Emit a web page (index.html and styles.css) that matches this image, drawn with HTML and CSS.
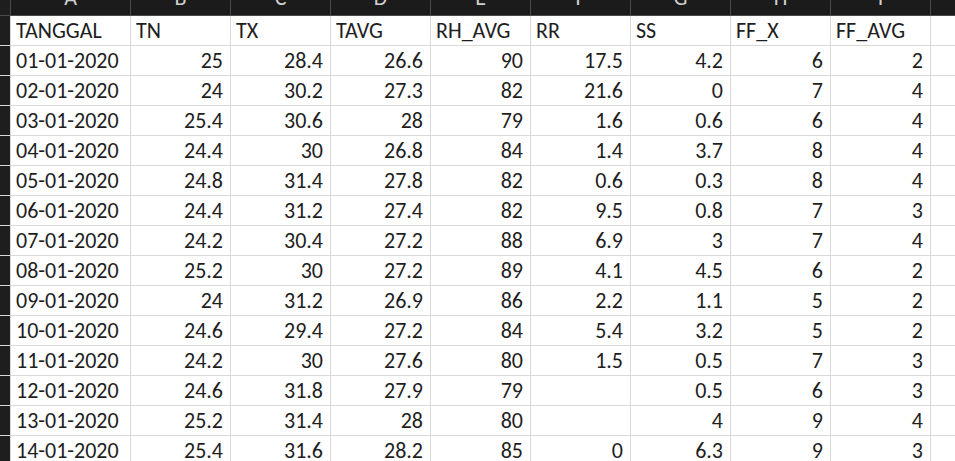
FILE: index.html
```html
<!DOCTYPE html>
<html>
<head>
<meta charset="utf-8">
<link rel="stylesheet" href="styles.css">
</head>
<body>
<div class="sheet">
  <div class="colheads">
    <div class="ch corner"><span class="corner-mark"></span></div>
    <div class="ch a"><span>A</span></div>
    <div class="ch"><span>B</span></div>
    <div class="ch"><span>C</span></div>
    <div class="ch"><span>D</span></div>
    <div class="ch"><span>E</span></div>
    <div class="ch"><span>F</span></div>
    <div class="ch"><span>G</span></div>
    <div class="ch"><span>H</span></div>
    <div class="ch"><span>I</span></div>
    <div class="ch j"><span>J</span></div>
  </div>
  <div class="grid">
    <div class="rh"></div><div class="c t">TANGGAL</div><div class="c t">TN</div><div class="c t">TX</div><div class="c t">TAVG</div><div class="c t">RH_AVG</div><div class="c t">RR</div><div class="c t">SS</div><div class="c t">FF_X</div><div class="c t">FF_AVG</div><div class="c"></div>
    <div class="rh"></div><div class="c t">01-01-2020</div><div class="c n">25</div><div class="c n">28.4</div><div class="c n">26.6</div><div class="c n">90</div><div class="c n">17.5</div><div class="c n">4.2</div><div class="c n">6</div><div class="c n">2</div><div class="c"></div>
    <div class="rh"></div><div class="c t">02-01-2020</div><div class="c n">24</div><div class="c n">30.2</div><div class="c n">27.3</div><div class="c n">82</div><div class="c n">21.6</div><div class="c n">0</div><div class="c n">7</div><div class="c n">4</div><div class="c"></div>
    <div class="rh"></div><div class="c t">03-01-2020</div><div class="c n">25.4</div><div class="c n">30.6</div><div class="c n">28</div><div class="c n">79</div><div class="c n">1.6</div><div class="c n">0.6</div><div class="c n">6</div><div class="c n">4</div><div class="c"></div>
    <div class="rh"></div><div class="c t">04-01-2020</div><div class="c n">24.4</div><div class="c n">30</div><div class="c n">26.8</div><div class="c n">84</div><div class="c n">1.4</div><div class="c n">3.7</div><div class="c n">8</div><div class="c n">4</div><div class="c"></div>
    <div class="rh"></div><div class="c t">05-01-2020</div><div class="c n">24.8</div><div class="c n">31.4</div><div class="c n">27.8</div><div class="c n">82</div><div class="c n">0.6</div><div class="c n">0.3</div><div class="c n">8</div><div class="c n">4</div><div class="c"></div>
    <div class="rh"></div><div class="c t">06-01-2020</div><div class="c n">24.4</div><div class="c n">31.2</div><div class="c n">27.4</div><div class="c n">82</div><div class="c n">9.5</div><div class="c n">0.8</div><div class="c n">7</div><div class="c n">3</div><div class="c"></div>
    <div class="rh"></div><div class="c t">07-01-2020</div><div class="c n">24.2</div><div class="c n">30.4</div><div class="c n">27.2</div><div class="c n">88</div><div class="c n">6.9</div><div class="c n">3</div><div class="c n">7</div><div class="c n">4</div><div class="c"></div>
    <div class="rh"></div><div class="c t">08-01-2020</div><div class="c n">25.2</div><div class="c n">30</div><div class="c n">27.2</div><div class="c n">89</div><div class="c n">4.1</div><div class="c n">4.5</div><div class="c n">6</div><div class="c n">2</div><div class="c"></div>
    <div class="rh"></div><div class="c t">09-01-2020</div><div class="c n">24</div><div class="c n">31.2</div><div class="c n">26.9</div><div class="c n">86</div><div class="c n">2.2</div><div class="c n">1.1</div><div class="c n">5</div><div class="c n">2</div><div class="c"></div>
    <div class="rh"></div><div class="c t">10-01-2020</div><div class="c n">24.6</div><div class="c n">29.4</div><div class="c n">27.2</div><div class="c n">84</div><div class="c n">5.4</div><div class="c n">3.2</div><div class="c n">5</div><div class="c n">2</div><div class="c"></div>
    <div class="rh"></div><div class="c t">11-01-2020</div><div class="c n">24.2</div><div class="c n">30</div><div class="c n">27.6</div><div class="c n">80</div><div class="c n">1.5</div><div class="c n">0.5</div><div class="c n">7</div><div class="c n">3</div><div class="c"></div>
    <div class="rh"></div><div class="c t">12-01-2020</div><div class="c n">24.6</div><div class="c n">31.8</div><div class="c n">27.9</div><div class="c n">79</div><div class="c n"></div><div class="c n">0.5</div><div class="c n">6</div><div class="c n">3</div><div class="c"></div>
    <div class="rh"></div><div class="c t">13-01-2020</div><div class="c n">25.2</div><div class="c n">31.4</div><div class="c n">28</div><div class="c n">80</div><div class="c n"></div><div class="c n">4</div><div class="c n">9</div><div class="c n">4</div><div class="c"></div>
    <div class="rh"></div><div class="c t">14-01-2020</div><div class="c n">25.4</div><div class="c n">31.6</div><div class="c n">28.2</div><div class="c n">85</div><div class="c n">0</div><div class="c n">6.3</div><div class="c n">9</div><div class="c n">3</div><div class="c"></div>
    <div class="rh"></div><div class="c"></div><div class="c"></div><div class="c"></div><div class="c"></div><div class="c"></div><div class="c"></div><div class="c"></div><div class="c"></div><div class="c"></div><div class="c"></div>
  </div>
</div>
</body>
</html>
```
FILE: styles.css
```css
html, body {
  margin: 0;
  padding: 0;
  background: #ffffff;
}
body {
  width: 955px;
  height: 461px;
  overflow: hidden;
  font-family: "Carlito", "Open Sans", sans-serif;
}
.sheet {
  display: flex;
  flex-direction: column;
  width: 955px;
}
.colheads {
  display: flex;
  gap: 1px;
  height: 16px;
  background: #4a4a4a;
  overflow: hidden;
}
.ch {
  flex: 0 0 99px;
  background: #1b1b1b;
  height: 15px;
  overflow: hidden;
  display: flex;
  justify-content: center;
  color: #cfcfcf;
  font-size: 22px;
}
.ch span {
  display: block;
  line-height: 22px;
  margin-top: -13px;
}
.ch.corner {
  flex: 0 0 10px;
  background: #1e1e1e;
  justify-content: flex-start;
  padding-left: 3px;
  box-sizing: border-box;
}
.corner-mark {
  display: block;
  width: 3px;
  height: 8px;
  margin-top: 3px;
  background: #555555;
}
.ch.a {
  flex: 0 0 119px;
}
.ch.j {
  flex: 1 0 99px;
}
.grid {
  display: grid;
  grid-template-columns: 10px 119px repeat(8, 99px) 1fr;
  grid-auto-rows: 29px;
  gap: 1px;
  background: #d9d9d9;
}
.rh {
  background: #1e1e1e;
}
.c {
  background: #ffffff;
  color: #1e1e1e;
  font-size: 22px;
  line-height: 29px;
  white-space: nowrap;
  overflow: hidden;
}
.c.t {
  text-align: left;
  padding-left: 5px;
}
.c.n {
  text-align: right;
  padding-right: 7px;
}
```
